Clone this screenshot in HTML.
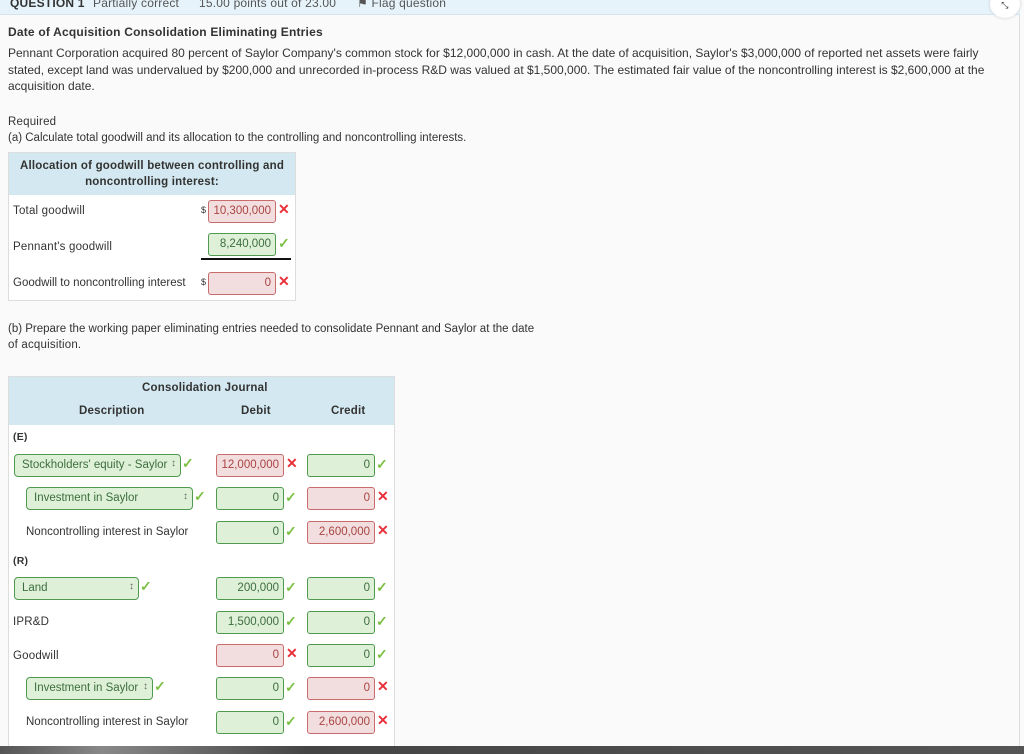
<!DOCTYPE html>
<html><head><style>
*{margin:0;padding:0;box-sizing:border-box}
body{width:1024px;height:754px;background:#fafafa;font-family:"Liberation Sans",sans-serif;font-size:11.5px;letter-spacing:.2px;color:#333;position:relative;overflow:hidden}
.a{position:absolute;white-space:nowrap}
.in{position:absolute;height:23px;border:1px solid;border-radius:3px;text-align:right;padding:4px 4px 0 0;font-size:11.5px;letter-spacing:0}
.r{background:#f2dede;border-color:#c96b6b;color:#a94442}
.g{background:#dff0d8;border-color:#4f9a4f;color:#3c6e3c}
.sel{position:absolute;height:23px;border:1px solid #4f9a4f;background:#dff0d8;border-radius:4px;padding:4px 0 0 7px;color:#3c6e3c;font-size:11.5px;letter-spacing:0;white-space:nowrap}
.sel:after{content:"\2195";position:absolute;right:4px;top:3px;font-size:10px;color:#666}
.ok{position:absolute;color:#7bc043;font-size:14px;font-weight:bold}
.x{position:absolute;color:#e8303a;font-size:14px;font-weight:bold}
</style></head><body>
<div class="a" style="left:0;top:0;width:1020px;height:15px;background:#e6f3fb;border-bottom:1px solid #d6e4ee"></div>
<div class="a" style="left:10px;top:-4px;font-weight:bold;color:#333;font-size:12px">QUESTION 1</div>
<div class="a" style="left:93px;top:-4px;color:#555;font-size:12px">Partially correct</div>
<div class="a" style="left:199px;top:-4px;color:#555;font-size:12px">15.00 points out of 23.00</div>
<div class="a" style="left:357px;top:-4px;color:#555;font-size:12px">⚑ Flag question</div>
<div class="a" style="left:990px;top:-10px;width:30px;height:28px;border-radius:50%;background:#fff;box-shadow:0 0 3px #ccc;text-align:center;font-size:9px;padding-top:10px">⤡</div>
<div class="a" style="left:1019px;top:15px;width:1px;height:731px;background:#ddd"></div>
<div class="a" style="left:8px;top:25px;font-weight:bold;font-size:12px">Date of Acquisition Consolidation Eliminating Entries</div>
<div class="a" style="left:8px;top:45px;line-height:16.5px;font-size:12px;letter-spacing:0">Pennant Corporation acquired 80 percent of Saylor Company's common stock for $12,000,000 in cash. At the date of acquisition, Saylor's $3,000,000 of reported net assets were fairly<br>stated, except land was undervalued by $200,000 and unrecorded in-process R&amp;D was valued at $1,500,000. The estimated fair value of the noncontrolling interest is $2,600,000 at the<br>acquisition date.</div>
<div class="a" style="left:8px;top:116px">Required</div>
<div class="a" style="left:8px;top:132px;letter-spacing:0">(a) Calculate total goodwill and its allocation to the controlling and noncontrolling interests.</div>

<div class="a" style="left:8px;top:152px;width:288px;height:149px;border:1px solid #ddd;background:#fff"></div>
<div class="a" style="left:9px;top:153px;width:286px;height:42px;background:#d3e8f0;text-align:center;font-weight:bold;line-height:16px;padding-top:5px;white-space:normal">Allocation of goodwill between controlling and noncontrolling interest:</div>
<div class="a" style="left:13px;top:205px">Total goodwill</div>
<div class="a" style="left:201px;top:205px;font-size:9px">$</div>
<div class="in r" style="left:208px;top:200px;width:68px">10,300,000</div><div class="x" style="left:278px;top:201px">✕</div>
<div class="a" style="left:13px;top:241px">Pennant's goodwill</div>
<div class="in g" style="left:208px;top:233px;width:68px">8,240,000</div><div class="ok" style="left:278px;top:235px">✓</div>
<div class="a" style="left:201px;top:258px;width:90px;height:2px;background:#111"></div>
<div class="a" style="left:13px;top:277px;letter-spacing:0">Goodwill to noncontrolling interest</div>
<div class="a" style="left:201px;top:277px;font-size:9px">$</div>
<div class="in r" style="left:208px;top:272px;width:68px">0</div><div class="x" style="left:278px;top:273px">✕</div>

<div class="a" style="left:8px;top:323px;letter-spacing:0">(b) Prepare the working paper eliminating entries needed to consolidate Pennant and Saylor at the date</div>
<div class="a" style="left:8px;top:339px">of acquisition.</div>

<div class="a" style="left:8px;top:376px;width:387px;height:372px;border:1px solid #ddd;background:#fff"></div>
<div class="a" style="left:9px;top:377px;width:385px;height:48px;background:#d3e8f0"></div>
<div class="a" style="left:142px;top:382px;font-weight:bold">Consolidation Journal</div>
<div class="a" style="left:79px;top:405px;font-weight:bold">Description</div>
<div class="a" style="left:241px;top:405px;font-weight:bold">Debit</div>
<div class="a" style="left:331px;top:405px;font-weight:bold">Credit</div>

<div class="a" style="left:13px;top:431px;font-weight:bold;font-size:10.5px">(E)</div>
<div class="sel" style="left:14px;top:454px;width:167px">Stockholders' equity - Saylor</div><div class="ok" style="left:182px;top:455px">✓</div>
<div class="in r" style="left:216px;top:454px;width:68px">12,000,000</div><div class="x" style="left:286px;top:455px">✕</div>
<div class="in g" style="left:307px;top:454px;width:68px">0</div><div class="ok" style="left:376px;top:456px">✓</div>

<div class="sel" style="left:26px;top:487px;width:167px">Investment in Saylor</div><div class="ok" style="left:194px;top:488px">✓</div>
<div class="in g" style="left:216px;top:487px;width:68px">0</div><div class="ok" style="left:285px;top:489px">✓</div>
<div class="in r" style="left:307px;top:487px;width:68px">0</div><div class="x" style="left:377px;top:488px">✕</div>

<div class="a" style="left:26px;top:526px;letter-spacing:0">Noncontrolling interest in Saylor</div>
<div class="in g" style="left:216px;top:521px;width:68px">0</div><div class="ok" style="left:285px;top:523px">✓</div>
<div class="in r" style="left:307px;top:521px;width:68px">2,600,000</div><div class="x" style="left:377px;top:522px">✕</div>

<div class="a" style="left:13px;top:555px;font-weight:bold;font-size:10.5px">(R)</div>
<div class="sel" style="left:14px;top:577px;width:125px">Land</div><div class="ok" style="left:140px;top:578px">✓</div>
<div class="in g" style="left:216px;top:577px;width:68px">200,000</div><div class="ok" style="left:285px;top:579px">✓</div>
<div class="in g" style="left:307px;top:577px;width:68px">0</div><div class="ok" style="left:376px;top:579px">✓</div>

<div class="a" style="left:13px;top:616px">IPR&amp;D</div>
<div class="in g" style="left:216px;top:611px;width:68px">1,500,000</div><div class="ok" style="left:285px;top:613px">✓</div>
<div class="in g" style="left:307px;top:611px;width:68px">0</div><div class="ok" style="left:376px;top:613px">✓</div>

<div class="a" style="left:13px;top:650px">Goodwill</div>
<div class="in r" style="left:216px;top:644px;width:68px">0</div><div class="x" style="left:286px;top:645px">✕</div>
<div class="in g" style="left:307px;top:644px;width:68px">0</div><div class="ok" style="left:376px;top:646px">✓</div>

<div class="sel" style="left:26px;top:677px;width:127px">Investment in Saylor</div><div class="ok" style="left:154px;top:678px">✓</div>
<div class="in g" style="left:216px;top:677px;width:68px">0</div><div class="ok" style="left:285px;top:679px">✓</div>
<div class="in r" style="left:307px;top:677px;width:68px">0</div><div class="x" style="left:377px;top:678px">✕</div>

<div class="a" style="left:26px;top:716px;letter-spacing:0">Noncontrolling interest in Saylor</div>
<div class="in g" style="left:216px;top:711px;width:68px">0</div><div class="ok" style="left:285px;top:713px">✓</div>
<div class="in r" style="left:307px;top:711px;width:68px">2,600,000</div><div class="x" style="left:377px;top:712px">✕</div>

<div class="a" style="left:0;top:746px;width:1024px;height:8px;background:linear-gradient(90deg,#555,#888 10%,#444 30%,#555 100%)"></div>
</body></html>
